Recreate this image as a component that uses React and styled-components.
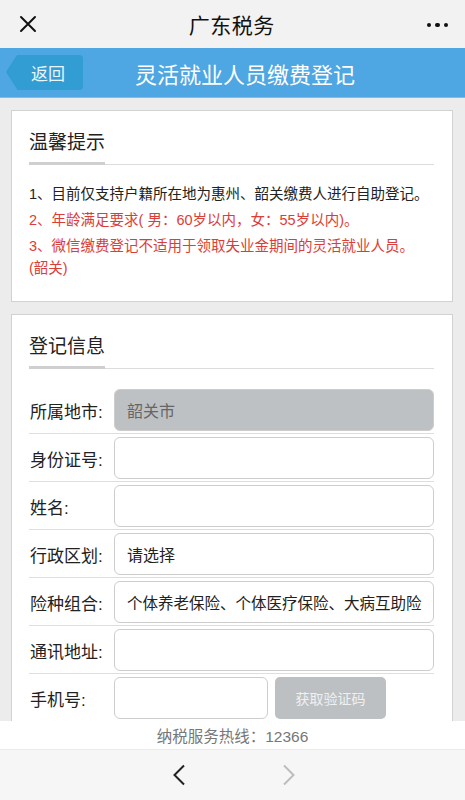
import React from 'react';
import styled, { createGlobalStyle } from 'styled-components';

const GlobalStyle = createGlobalStyle`
  html, body {
    margin: 0;
    padding: 0;
    background: #ececec;
  }
  body {
    font-family: "Liberation Sans", "Noto Sans CJK SC", sans-serif;
  }
  * {
    box-sizing: border-box;
  }
`;

const Page = styled.div`
  width: 465px;
  height: 800px;
  display: flex;
  flex-direction: column;
  overflow: hidden;
  background: #ececec;
`;

const TopBar = styled.div`
  height: 48px;
  flex-shrink: 0;
  background: #f2f2f2;
  display: flex;
  align-items: center;
  justify-content: space-between;
  padding: 0 17px 0 19px;
`;

const TopTitle = styled.div`
  font-size: 21px;
  color: #111;
  letter-spacing: 0.5px;
`;

const Dots = styled.div`
  display: flex;
  gap: 4px;
  padding-top: 2px;
`;

const Dot = styled.span`
  width: 4.5px;
  height: 4.5px;
  border-radius: 50%;
  background: #111;
`;

const BlueBar = styled.div`
  height: 50px;
  flex-shrink: 0;
  background: #4ea6e3;
  display: flex;
  align-items: center;
  border-bottom: 1px solid #7cbde9;
`;

const BackButton = styled.div`
  position: relative;
  margin-left: 17px;
  width: 66px;
  height: 35px;
  background: #329dd3;
  border-radius: 0 4px 4px 0;
  color: #eaf5fc;
  font-size: 17px;
  display: flex;
  align-items: center;
  padding-left: 14px;

  &::before {
    content: '';
    position: absolute;
    left: -11px;
    top: 0;
    border-top: 17.5px solid transparent;
    border-bottom: 17.5px solid transparent;
    border-right: 11px solid #329dd3;
  }
`;

const BarTitle = styled.div`
  flex: 1;
  text-align: center;
  color: #fff;
  font-size: 22px;
  padding-right: 58px;
`;

const Content = styled.div`
  flex: 1;
  overflow: hidden;
  padding: 12px 12px 0 11px;
  display: flex;
  flex-direction: column;
  gap: 12px;
`;

const Card = styled.div`
  background: #fff;
  border: 1px solid #d2d2d2;
  padding: 19px 18px ${(p) => (p.$open ? '0' : '18px')} 17px;
  flex-shrink: 0;
`;

const CardTitle = styled.div`
  font-size: 19px;
  color: #222;
  line-height: 26px;
  padding-bottom: 6px;
`;

const Divider = styled.div`
  height: 3px;
  border-bottom: 1px solid #dcdcdc;
  margin-bottom: ${(p) => p.$gap}px;

  &::before {
    content: '';
    display: block;
    width: 76px;
    height: 3px;
    background: #cfcfcf;
  }
`;

const Tip = styled.p`
  margin: 0 0 4px;
  font-size: 14.5px;
  line-height: 22px;
  color: ${(p) => (p.$red ? '#dc3d36' : '#222')};
`;

const Row = styled.div`
  display: flex;
  align-items: center;
  padding: 3px 0 2px;
  border-bottom: 1px solid #dedede;
`;

const Label = styled.div`
  width: 85px;
  flex-shrink: 0;
  font-size: 17px;
  color: #222;
  padding-left: 1px;
  align-self: stretch;
  display: flex;
  align-items: center;
`;

const Field = styled.div`
  flex: 1;
  height: 42px;
  border: 1px solid #cdcdcd;
  border-radius: 6px;
  background: ${(p) => (p.$disabled ? '#bec1c4' : '#fff')};
  color: ${(p) => (p.$disabled ? '#666' : '#222')};
  font-size: ${(p) => (p.$small ? '15.5px' : '16px')};
  display: flex;
  align-items: center;
  padding-left: 12px;
  white-space: nowrap;
  overflow: hidden;
`;

const PhoneGroup = styled.div`
  flex: 1;
  display: flex;
  gap: 7px;
  padding-right: 48px;
`;

const CodeButton = styled.div`
  width: 111px;
  height: 42px;
  flex-shrink: 0;
  border-radius: 5px;
  background: #bcc0c3;
  color: #eef0f1;
  font-size: 14px;
  display: flex;
  align-items: center;
  justify-content: center;
`;

const Hotline = styled.div`
  height: 28px;
  flex-shrink: 0;
  background: #fff;
  color: #777;
  font-size: 15.5px;
  display: flex;
  align-items: center;
  justify-content: center;
`;

const BottomNav = styled.div`
  height: 51px;
  flex-shrink: 0;
  background: #f6f6f6;
  border-top: 1px solid #ebebeb;
  display: flex;
  align-items: center;
  justify-content: center;
  gap: 96px;
  padding-left: 2px;
`;

const Close = () => (
  <svg width="18" height="18" viewBox="0 0 18 18">
    <path d="M2 2 L16 16 M16 2 L2 16" stroke="#111" strokeWidth="2" strokeLinecap="round" />
  </svg>
);

const Chevron = ({ right, color }) => (
  <svg width="14" height="22" viewBox="0 0 14 22">
    <path
      d={right ? 'M2 1.5 L11.5 11 L2 20.5' : 'M12 1.5 L2.5 11 L12 20.5'}
      stroke={color}
      strokeWidth="2"
      fill="none"
    />
  </svg>
);

const rows = [
  { label: '所属地市:', value: '韶关市', disabled: true },
  { label: '身份证号:', value: '' },
  { label: '姓名:', value: '' },
  { label: '行政区划:', value: '请选择' },
  { label: '险种组合:', value: '个体养老保险、个体医疗保险、大病互助险', small: true },
  { label: '通讯地址:', value: '' },
];

export default function App() {
  return (
    <Page>
      <GlobalStyle />
      <TopBar>
        <Close />
        <TopTitle>广东税务</TopTitle>
        <Dots>
          <Dot />
          <Dot />
          <Dot />
        </Dots>
      </TopBar>
      <BlueBar>
        <BackButton>返回</BackButton>
        <BarTitle>灵活就业人员缴费登记</BarTitle>
      </BlueBar>
      <Content>
        <Card>
          <CardTitle>温馨提示</CardTitle>
          <Divider $gap={18} />
          <Tip>1、目前仅支持户籍所在地为惠州、韶关缴费人进行自助登记。</Tip>
          <Tip $red>2、年龄满足要求( 男：60岁以内，女：55岁以内)。</Tip>
          <Tip $red>
            3、微信缴费登记不适用于领取失业金期间的灵活就业人员。
            <br />
            (韶关)
          </Tip>
        </Card>
        <Card $open>
          <CardTitle>登记信息</CardTitle>
          <Divider $gap={17} />
          {rows.map((r) => (
            <Row key={r.label}>
              <Label>{r.label}</Label>
              <Field $disabled={r.disabled} $small={r.small}>
                {r.value}
              </Field>
            </Row>
          ))}
          <Row>
            <Label>手机号:</Label>
            <PhoneGroup>
              <Field />
              <CodeButton>获取验证码</CodeButton>
            </PhoneGroup>
          </Row>
        </Card>
      </Content>
      <Hotline>纳税服务热线：12366</Hotline>
      <BottomNav>
        <Chevron color="#222" />
        <Chevron right color="#bdbdbd" />
      </BottomNav>
    </Page>
  );
}
